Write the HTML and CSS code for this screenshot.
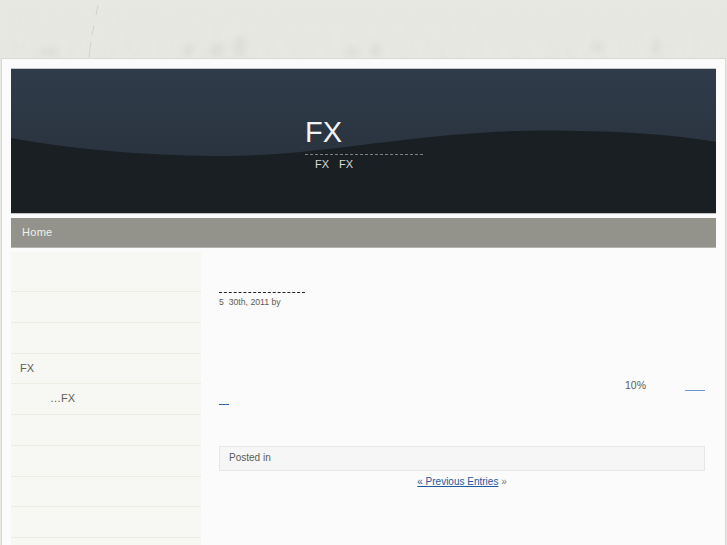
FILE: index.html
```html
<!DOCTYPE html>
<html lang="en">
<head>
<meta charset="utf-8">
<title>FX</title>
<link rel="stylesheet" href="styles.css">
</head>
<body>
<svg class="grunge" width="727" height="59" viewBox="0 0 727 59" aria-hidden="true">
  <defs>
    <filter id="rough" x="0" y="0" width="100%" height="100%">
      <feTurbulence type="fractalNoise" baseFrequency="0.12 0.05" numOctaves="4" seed="11"/>
      <feColorMatrix values="0 0 0 0 0.78  0 0 0 0 0.78  0 0 0 0 0.75  0 0 0 3 -1.15"/>
      <feGaussianBlur stdDeviation="0.5"/>
    </filter>
    <linearGradient id="fade" x1="0" y1="0" x2="0" y2="1">
      <stop offset="0.15" stop-color="#000"/>
      <stop offset="1" stop-color="#eee"/>
    </linearGradient>
    <mask id="rise"><rect width="727" height="59" fill="url(#fade)"/></mask>
    <filter id="soft"><feGaussianBlur stdDeviation="3"/></filter>
  </defs>
  <rect width="727" height="59" filter="url(#rough)" mask="url(#rise)"/>
  <g fill="#d2d2cd" opacity=".45" filter="url(#soft)">
    <ellipse cx="240" cy="47" rx="6" ry="11"/>
    <ellipse cx="217" cy="50" rx="7" ry="8"/>
    <ellipse cx="188" cy="50" rx="5" ry="7"/>
    <ellipse cx="50" cy="52" rx="10" ry="4"/>
    <ellipse cx="352" cy="52" rx="5" ry="6"/>
    <ellipse cx="376" cy="50" rx="5" ry="7"/>
    <ellipse cx="597" cy="47" rx="6" ry="5"/>
    <ellipse cx="657" cy="47" rx="4" ry="9"/>
  </g>
  <path class="streak" d="M98 5L96 15M94 25L92 35M91 42L89 57"/>
</svg>
<div class="page">
  <header class="masthead">
    <svg class="wave" width="705" height="144" viewBox="0 0 705 144" aria-hidden="true">
      <path d="M0 69C70 82 150 87 215 87C310 87 410 62 532 61.500C600 61.500 660 65 705 73V144H0Z"/>
    </svg>
    <div class="brand">
      <h1 class="brand-title">FX</h1>
      <p class="brand-tag"><span>FX</span><span>FX</span></p>
    </div>
  </header>
  <nav class="menu"><a href="#">Home</a></nav>
  <div class="columns">
    <aside class="sidebar">
      <ul class="side-list">
        <li class="first">&nbsp;</li>
        <li>&nbsp;</li>
        <li>&nbsp;</li>
        <li>FX</li>
        <li class="indent">…FX</li>
        <li>&nbsp;</li>
        <li>&nbsp;</li>
        <li>&nbsp;</li>
        <li>&nbsp;</li>
      </ul>
    </aside>
    <main class="content">
      <div class="post-rule"></div>
      <p class="post-date">5&nbsp; 30th, 2011 by</p>
      <div class="stat-row">
        <span>10%</span>
        <a class="blank-link wide" href="#">&nbsp;</a>
      </div>
      <a class="blank-link short" href="#">&nbsp;</a>
      <div class="post-meta">Posted in</div>
      <div class="pager"><a href="#">« Previous Entries</a> <span>»</span></div>
    </main>
  </div>
</div>
</body>
</html>
```
FILE: styles.css
```css
html, body {
  margin: 0;
  padding: 0;
  height: 545px;
  overflow: hidden;
}
body {
  background: #e8e8e3;
  font-family: "Liberation Sans", Arial, sans-serif;
  position: relative;
}
.grunge {
  position: absolute;
  left: 0;
  top: 0;
}
.streak {
  fill: none;
  stroke: #c4c4be;
  stroke-width: 1;
  opacity: .6;
}
.page {
  position: relative;
  box-sizing: border-box;
  margin: 58px 1px 0;
  height: 487px;
  padding: 9px 9px 0;
  background: #fbfbfb;
  border: 1px solid #d9d9d3;
  border-bottom: 0;
}
.masthead {
  position: relative;
  height: 144px;
  background: linear-gradient(#303c4a, #252e38);
  border-top: 1px solid #c3c7cc;
  border-bottom: 1px solid #bfc0c0;
  display: flex;
  padding-left: 294px;
  overflow: hidden;
}
.wave {
  position: absolute;
  left: 0;
  top: 0;
}
.wave path {
  fill: #1a1f24;
}
.brand {
  position: relative;
  width: 118px;
  padding-top: 45px;
}
.brand-title {
  margin: 0;
  font-size: 29px;
  font-weight: normal;
  line-height: 36px;
  height: 40px;
  color: #f2f3f3;
  border-bottom: 1px dashed #7b8084;
}
.brand-tag {
  margin: 2px 0 0 10px;
  display: flex;
  gap: 10px;
  font-size: 11px;
  line-height: 15px;
  color: #d8d9d8;
}
.menu {
  box-sizing: border-box;
  height: 30px;
  margin-top: 4px;
  padding-left: 11px;
  background: #93938b;
  border-bottom: 1px solid #b4b4ae;
  line-height: 29px;
  font-size: 11px;
  letter-spacing: .3px;
}
.menu a {
  color: #f0f0ea;
  text-decoration: none;
}
.columns {
  display: flex;
  margin-top: 4px;
}
.sidebar {
  flex: 0 0 190px;
  background: #f7f7f3;
  height: 293px;
}
.side-list {
  list-style: none;
  margin: 0;
  padding: 0;
}
.side-list li {
  box-sizing: border-box;
  height: 30.75px;
  line-height: 29px;
  padding-left: 9px;
  font-size: 11px;
  color: #5f5f55;
  border-bottom: 1px solid #ecede3;
}
.side-list li.first {
  height: 40px;
}
.side-list li.indent {
  padding-left: 39px;
}
.content {
  flex: 1;
  padding: 0 11px 0 18px;
  font-size: 10.500px;
  color: #5c5c56;
}
.post-rule {
  width: 86px;
  height: 40px;
  border-bottom: 1px dashed #222;
}
.post-date {
  margin: 3px 0 0;
  font-size: 8.700px;
  line-height: 12px;
  color: #5c5c56;
}
.stat-row {
  display: flex;
  justify-content: flex-end;
  gap: 39px;
  margin-top: 70px;
  line-height: 14px;
}
.blank-link {
  display: block;
  height: 12px;
  border-bottom: 1px solid #2a68ad;
  line-height: 12px;
  text-decoration: none;
}
.blank-link.wide {
  width: 20px;
  border-bottom-color: #6d9ac9;
}
.blank-link.short {
  width: 10px;
  margin-top: 0;
}
.post-meta {
  box-sizing: border-box;
  height: 25px;
  margin-top: 41px;
  padding-left: 9px;
  background: #f5f6f5;
  border: 1px solid #e6e8e6;
  line-height: 21px;
  font-size: 10px;
}
.pager {
  margin-top: 4px;
  text-align: center;
  line-height: 14px;
  font-size: 10px;
  color: #777;
}
.pager a {
  color: #1e5a9c;
}
```
